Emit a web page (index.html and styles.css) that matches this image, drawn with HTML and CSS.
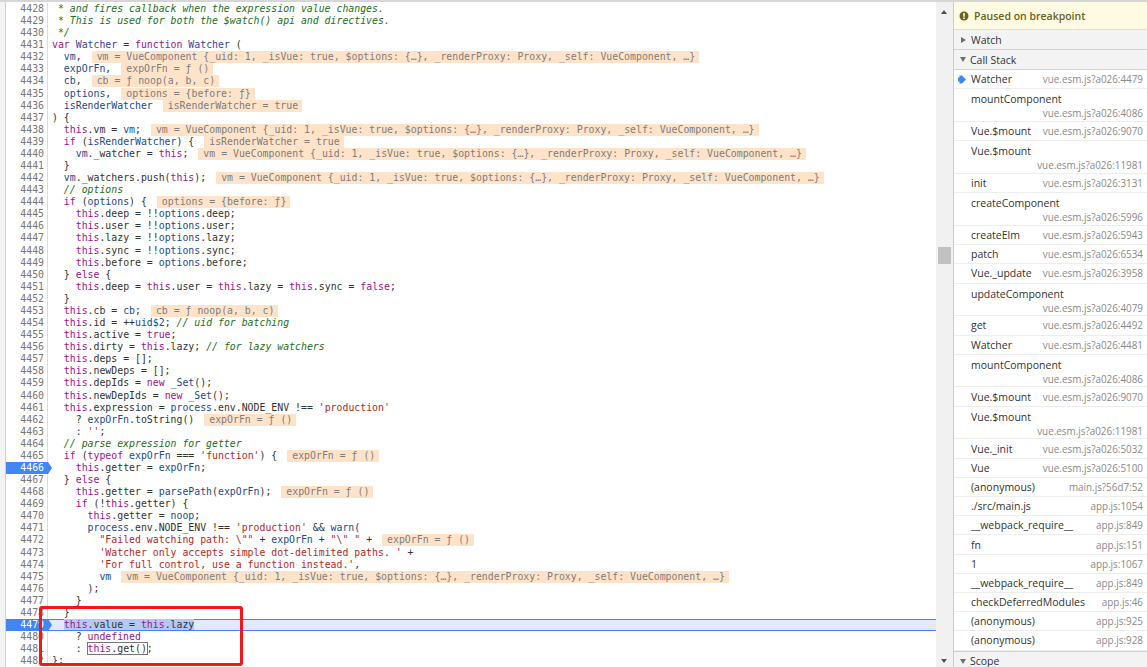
FILE: index.html
```html
<!DOCTYPE html>
<html lang="en">
<head>
    <meta charset="UTF-8">
    <title>Sources - vue.esm.js</title>
    <link rel="stylesheet" href="styles.css">
</head>
<body>
<div class="devtools">
    <div class="navstrip"></div>
    <div class="editor">
<div class="line"><span class="num">4428</span><span class="code"><span class="c"> * and fires callback when the expression value changes.</span></span></div>
<div class="line"><span class="num">4429</span><span class="code"><span class="c"> * This is used for both the $watch() api and directives.</span></span></div>
<div class="line"><span class="num">4430</span><span class="code"><span class="c"> */</span></span></div>
<div class="line"><span class="num">4431</span><span class="code"><span class="k">var</span> <span class="d">Watcher</span> = <span class="k">function</span> <span class="d">Watcher</span> (</span></div>
<div class="line"><span class="num">4432</span><span class="code">  <span class="v">vm</span>,<span class="val">vm = VueComponent {_uid: 1, _isVue: true, $options: {…}, _renderProxy: Proxy, _self: VueComponent, …}</span></span></div>
<div class="line"><span class="num">4433</span><span class="code">  <span class="v">expOrFn</span>,<span class="val">expOrFn = ƒ ()</span></span></div>
<div class="line"><span class="num">4434</span><span class="code">  <span class="v">cb</span>,<span class="val">cb = ƒ noop(a, b, c)</span></span></div>
<div class="line"><span class="num">4435</span><span class="code">  <span class="v">options</span>,<span class="val">options = {before: ƒ}</span></span></div>
<div class="line"><span class="num">4436</span><span class="code">  <span class="v">isRenderWatcher</span><span class="val">isRenderWatcher = true</span></span></div>
<div class="line"><span class="num">4437</span><span class="code">) {</span></div>
<div class="line"><span class="num">4438</span><span class="code">  <span class="k">this</span>.vm = <span class="v">vm</span>;<span class="val">vm = VueComponent {_uid: 1, _isVue: true, $options: {…}, _renderProxy: Proxy, _self: VueComponent, …}</span></span></div>
<div class="line"><span class="num">4439</span><span class="code">  <span class="k">if</span> (<span class="v">isRenderWatcher</span>) {<span class="val">isRenderWatcher = true</span></span></div>
<div class="line"><span class="num">4440</span><span class="code">    <span class="v">vm</span>._watcher = <span class="k">this</span>;<span class="val">vm = VueComponent {_uid: 1, _isVue: true, $options: {…}, _renderProxy: Proxy, _self: VueComponent, …}</span></span></div>
<div class="line"><span class="num">4441</span><span class="code">  }</span></div>
<div class="line"><span class="num">4442</span><span class="code">  <span class="v">vm</span>._watchers.push(<span class="k">this</span>);<span class="val">vm = VueComponent {_uid: 1, _isVue: true, $options: {…}, _renderProxy: Proxy, _self: VueComponent, …}</span></span></div>
<div class="line"><span class="num">4443</span><span class="code">  <span class="c">// options</span></span></div>
<div class="line"><span class="num">4444</span><span class="code">  <span class="k">if</span> (<span class="v">options</span>) {<span class="val">options = {before: ƒ}</span></span></div>
<div class="line"><span class="num">4445</span><span class="code">    <span class="k">this</span>.deep = !!<span class="v">options</span>.deep;</span></div>
<div class="line"><span class="num">4446</span><span class="code">    <span class="k">this</span>.user = !!<span class="v">options</span>.user;</span></div>
<div class="line"><span class="num">4447</span><span class="code">    <span class="k">this</span>.lazy = !!<span class="v">options</span>.lazy;</span></div>
<div class="line"><span class="num">4448</span><span class="code">    <span class="k">this</span>.sync = !!<span class="v">options</span>.sync;</span></div>
<div class="line"><span class="num">4449</span><span class="code">    <span class="k">this</span>.before = <span class="v">options</span>.before;</span></div>
<div class="line"><span class="num">4450</span><span class="code">  } <span class="k">else</span> {</span></div>
<div class="line"><span class="num">4451</span><span class="code">    <span class="k">this</span>.deep = <span class="k">this</span>.user = <span class="k">this</span>.lazy = <span class="k">this</span>.sync = <span class="k">false</span>;</span></div>
<div class="line"><span class="num">4452</span><span class="code">  }</span></div>
<div class="line"><span class="num">4453</span><span class="code">  <span class="k">this</span>.cb = <span class="v">cb</span>;<span class="val">cb = ƒ noop(a, b, c)</span></span></div>
<div class="line"><span class="num">4454</span><span class="code">  <span class="k">this</span>.id = ++<span class="v">uid$2</span>; <span class="c">// uid for batching</span></span></div>
<div class="line"><span class="num">4455</span><span class="code">  <span class="k">this</span>.active = <span class="k">true</span>;</span></div>
<div class="line"><span class="num">4456</span><span class="code">  <span class="k">this</span>.dirty = <span class="k">this</span>.lazy; <span class="c">// for lazy watchers</span></span></div>
<div class="line"><span class="num">4457</span><span class="code">  <span class="k">this</span>.deps = [];</span></div>
<div class="line"><span class="num">4458</span><span class="code">  <span class="k">this</span>.newDeps = [];</span></div>
<div class="line"><span class="num">4459</span><span class="code">  <span class="k">this</span>.depIds = <span class="k">new</span> <span class="v">_Set</span>();</span></div>
<div class="line"><span class="num">4460</span><span class="code">  <span class="k">this</span>.newDepIds = <span class="k">new</span> <span class="v">_Set</span>();</span></div>
<div class="line"><span class="num">4461</span><span class="code">  <span class="k">this</span>.expression = <span class="v">process</span>.env.NODE_ENV !== <span class="s">'production'</span></span></div>
<div class="line"><span class="num">4462</span><span class="code">    ? <span class="v">expOrFn</span>.toString()<span class="val">expOrFn = ƒ ()</span></span></div>
<div class="line"><span class="num">4463</span><span class="code">    : <span class="s">''</span>;</span></div>
<div class="line"><span class="num">4464</span><span class="code">  <span class="c">// parse expression for getter</span></span></div>
<div class="line"><span class="num">4465</span><span class="code">  <span class="k">if</span> (<span class="k">typeof</span> <span class="v">expOrFn</span> === <span class="s">'function'</span>) {<span class="val">expOrFn = ƒ ()</span></span></div>
<div class="line"><span class="num bp">4466</span><span class="code">    <span class="k">this</span>.getter = <span class="v">expOrFn</span>;</span></div>
<div class="line"><span class="num">4467</span><span class="code">  } <span class="k">else</span> {</span></div>
<div class="line"><span class="num">4468</span><span class="code">    <span class="k">this</span>.getter = <span class="v">parsePath</span>(<span class="v">expOrFn</span>);<span class="val">expOrFn = ƒ ()</span></span></div>
<div class="line"><span class="num">4469</span><span class="code">    <span class="k">if</span> (!<span class="k">this</span>.getter) {</span></div>
<div class="line"><span class="num">4470</span><span class="code">      <span class="k">this</span>.getter = <span class="v">noop</span>;</span></div>
<div class="line"><span class="num">4471</span><span class="code">      <span class="v">process</span>.env.NODE_ENV !== <span class="s">'production'</span> &amp;&amp; <span class="v">warn</span>(</span></div>
<div class="line"><span class="num">4472</span><span class="code">        <span class="s">"Failed watching path: \""</span> + <span class="v">expOrFn</span> + <span class="s">"\" "</span> +<span class="val">expOrFn = ƒ ()</span></span></div>
<div class="line"><span class="num">4473</span><span class="code">        <span class="s">'Watcher only accepts simple dot-delimited paths. '</span> +</span></div>
<div class="line"><span class="num">4474</span><span class="code">        <span class="s">'For full control, use a function instead.'</span>,</span></div>
<div class="line"><span class="num">4475</span><span class="code">        <span class="v">vm</span><span class="val">vm = VueComponent {_uid: 1, _isVue: true, $options: {…}, _renderProxy: Proxy, _self: VueComponent, …}</span></span></div>
<div class="line"><span class="num">4476</span><span class="code">      );</span></div>
<div class="line"><span class="num">4477</span><span class="code">    }</span></div>
<div class="line"><span class="num">4478</span><span class="code">  }</span></div>
<div class="line current"><span class="num bp">4479</span><span class="code">  <span class="sel"><span class="k">this</span>.value = <span class="k">this</span>.lazy</span></span></div>
<div class="line"><span class="num">4480</span><span class="code">    ? <span class="k">undefined</span></span></div>
<div class="line"><span class="num">4481</span><span class="code">    : <span class="evalbox"><span class="k">this</span>.get()</span>;</span></div>
<div class="line"><span class="num">4482</span><span class="code">};</span></div>
        <div class="redbox"></div>
    </div>
    <div class="vscroll">
        <span class="tri up"></span>
        <span class="thumb"></span>
        <span class="tri down"></span>
    </div>
    <aside class="sidebar">
        <div class="paused">
            <svg class="paused-icon" width="10" height="10" viewBox="0 0 10 10"><circle cx="5" cy="5" r="4.5" fill="#6b6320"/><rect x="4.2" y="2" width="1.6" height="3.8" fill="#fffbe3"/><rect x="4.2" y="6.5" width="1.6" height="1.5" fill="#fffbe3"/></svg>
            <span>Paused on breakpoint</span>
        </div>
        <div class="section"><span class="arrow right"></span>Watch</div>
        <div class="section"><span class="arrow open"></span>Call Stack</div>
        <div class="stack">
            <div class="frame"><svg class="here" width="8" height="9" viewBox="0 0 8 9"><path d="M0 2.5 H1.5 V0.5 H4 L8 4.5 L4 8.5 H1.5 V6.5 H0 Z" fill="#4285f4"/></svg><span class="fn">Watcher</span><span class="loc">vue.esm.js?a026:4479</span></div>
            <div class="frame two"><span class="fn">mountComponent</span><span class="loc">vue.esm.js?a026:4086</span></div>
            <div class="frame"><span class="fn">Vue.$mount</span><span class="loc">vue.esm.js?a026:9070</span></div>
            <div class="frame two"><span class="fn">Vue.$mount</span><span class="loc">vue.esm.js?a026:11981</span></div>
            <div class="frame"><span class="fn">init</span><span class="loc">vue.esm.js?a026:3131</span></div>
            <div class="frame two"><span class="fn">createComponent</span><span class="loc">vue.esm.js?a026:5996</span></div>
            <div class="frame"><span class="fn">createElm</span><span class="loc">vue.esm.js?a026:5943</span></div>
            <div class="frame"><span class="fn">patch</span><span class="loc">vue.esm.js?a026:6534</span></div>
            <div class="frame"><span class="fn">Vue._update</span><span class="loc">vue.esm.js?a026:3958</span></div>
            <div class="frame two"><span class="fn">updateComponent</span><span class="loc">vue.esm.js?a026:4079</span></div>
            <div class="frame"><span class="fn">get</span><span class="loc">vue.esm.js?a026:4492</span></div>
            <div class="frame"><span class="fn">Watcher</span><span class="loc">vue.esm.js?a026:4481</span></div>
            <div class="frame two"><span class="fn">mountComponent</span><span class="loc">vue.esm.js?a026:4086</span></div>
            <div class="frame"><span class="fn">Vue.$mount</span><span class="loc">vue.esm.js?a026:9070</span></div>
            <div class="frame two"><span class="fn">Vue.$mount</span><span class="loc">vue.esm.js?a026:11981</span></div>
            <div class="frame"><span class="fn">Vue._init</span><span class="loc">vue.esm.js?a026:5032</span></div>
            <div class="frame"><span class="fn">Vue</span><span class="loc">vue.esm.js?a026:5100</span></div>
            <div class="frame"><span class="fn">(anonymous)</span><span class="loc">main.js?56d7:52</span></div>
            <div class="frame"><span class="fn">./src/main.js</span><span class="loc">app.js:1054</span></div>
            <div class="frame"><span class="fn">__webpack_require__</span><span class="loc">app.js:849</span></div>
            <div class="frame"><span class="fn">fn</span><span class="loc">app.js:151</span></div>
            <div class="frame"><span class="fn">1</span><span class="loc">app.js:1067</span></div>
            <div class="frame"><span class="fn">__webpack_require__</span><span class="loc">app.js:849</span></div>
            <div class="frame"><span class="fn">checkDeferredModules</span><span class="loc">app.js:46</span></div>
            <div class="frame"><span class="fn">(anonymous)</span><span class="loc">app.js:925</span></div>
            <div class="frame"><span class="fn">(anonymous)</span><span class="loc">app.js:928</span></div>
        </div>
        <div class="section last"><span class="arrow open"></span>Scope</div>
    </aside>
</div>
</body>
</html>
```

FILE: styles.css
```css
html, body {
    margin: 0;
    padding: 0;
    height: 100%;
    overflow: hidden;
    background: #fff;
}

.devtools {
    display: flex;
    height: 667px;
    border-top: 2px solid #d6d6d6;
    box-sizing: border-box;
}

.navstrip {
    width: 5px;
    flex: none;
    background: #f3f3f3;
    border-right: 1px solid #d0d0d0;
}

/* source pane */
.editor {
    position: relative;
    flex: 1;
    min-width: 0;
    overflow: hidden;
    padding-top: 1px;
    font-family: "DejaVu Sans Mono", monospace;
    font-size: 9.85px;
    color: #333;
}

.line {
    display: flex;
    height: 12.08px;
    line-height: 12.08px;
    white-space: pre;
}

.num {
    flex: none;
    position: relative;
    width: 38px;
    padding-right: 3px;
    text-align: right;
    color: #777;
    border-right: 1px solid #ddd;
    box-sizing: content-box;
}

.num.bp {
    color: #fff;
    background: #4285f4;
    border-right: 1px solid #4285f4;
}

.num.bp::after {
    content: "";
    position: absolute;
    right: -5px;
    top: 0;
    border-left: 4px solid #4285f4;
    border-top: 6px solid transparent;
    border-bottom: 6px solid transparent;
}

.code {
    flex: 1;
    padding-left: 4px;
}

.current .code {
    background: #e3e9fb;
    box-shadow: 0 -1px 0 #4285f4 inset, 0 1px 0 #4285f4 inset;
}

.sel { background: #b5c7f3; }

.evalbox {
    outline: 1px solid #777;
    outline-offset: 0;
}

.k { color: #a0118f; }
.d { color: #3a3f9f; }
.v { color: #1d4a8c; }
.s { color: #b8281e; }
.c { color: #236e25; font-style: italic; }

.val {
    display: inline-block;
    height: 12px;
    margin-left: 10px;
    padding: 0 4px 0 5px;
    background: #ffe3c9;
    color: #7d7d7d;
}

.redbox {
    position: absolute;
    left: 33px;
    top: 604px;
    width: 198px;
    height: 54px;
    border: 3px solid #f01818;
    border-radius: 3px;
}

/* scrollbar between source and sidebar */
.vscroll {
    width: 17px;
    flex: none;
    position: relative;
    background: #f1f1f1;
}

.thumb {
    position: absolute;
    left: 2px;
    top: 245px;
    width: 13px;
    height: 17px;
    background: #c1c1c1;
}

.tri {
    position: absolute;
    left: 5px;
    border-left: 3.5px solid transparent;
    border-right: 3.5px solid transparent;
}

.tri.up { top: 8px; border-bottom: 4px solid #505050; }
.tri.down { bottom: 4px; border-top: 4px solid #505050; }

/* debugger sidebar */
.sidebar {
    width: 194px;
    flex: none;
    display: flex;
    flex-direction: column;
    box-sizing: border-box;
    border-left: 1px solid #ccc;
    overflow: hidden;
    font-family: "Open Sans", sans-serif;
    font-size: 10.5px;
    color: #333;
}

.paused {
    display: flex;
    align-items: center;
    gap: 5px;
    height: 28px;
    flex: none;
    padding-left: 5px;
    box-sizing: border-box;
    background: #fffbe3;
    border-bottom: 1px solid #ddd;
    color: #6b6320;
    font-weight: 600;
}

.section {
    display: flex;
    align-items: center;
    height: 20px;
    flex: none;
    box-sizing: border-box;
    padding-left: 6px;
    background: #f3f3f3;
    border-bottom: 1px solid #d0d0d0;
}

.section.last { border-top: 1px solid #d0d0d0; border-bottom: 0; }

.arrow {
    width: 0;
    height: 0;
    margin-right: 4px;
}

.arrow.right {
    margin-left: 1px;
    margin-right: 5px;
    border-left: 5px solid #6e6e6e;
    border-top: 3.5px solid transparent;
    border-bottom: 3.5px solid transparent;
}

.arrow.open {
    border-top: 5px solid #6e6e6e;
    border-left: 3.5px solid transparent;
    border-right: 3.5px solid transparent;
}

.stack {
    flex: none;
}

.frame {
    position: relative;
    display: flex;
    justify-content: space-between;
    align-items: center;
    height: 19.2px;
    box-sizing: border-box;
    padding: 0 4px 0 17px;
    border-bottom: 1px solid #eee;
    white-space: nowrap;
}

.frame.two {
    display: block;
    height: 32.8px;
    padding-top: 3px;
    line-height: 14px;
}

.frame.two .fn { display: block; }
.frame.two .loc { display: block; text-align: right; }

.loc {
    color: #8a8a8a;
    font-size: 9.9px;
}

.here {
    position: absolute;
    left: 4px;
    top: 5px;
}
```
